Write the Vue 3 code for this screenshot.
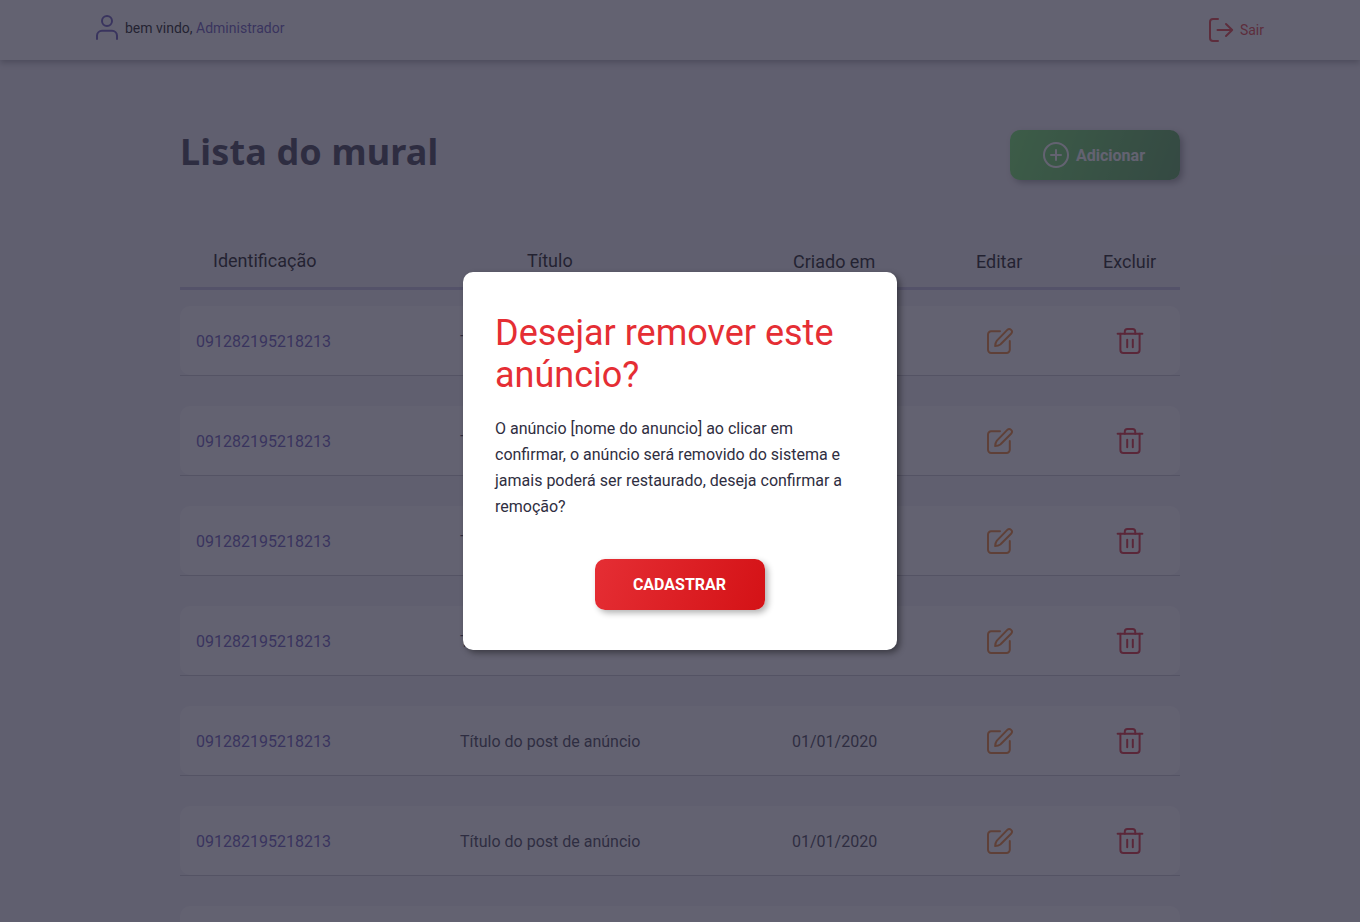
<script setup>
const rows = Array.from({ length: 6 }, (_, i) => ({
  key: i,
  id: '091282195218213',
  title: 'Título do post de anúncio',
  date: '01/01/2020',
}))
</script>

<template>
  <div class="page">
    <header class="topbar">
      <div class="user">
        <svg class="user-icon" width="24" height="26" viewBox="0 0 24 26" fill="none">
          <circle cx="12" cy="6.9" r="5" />
          <path d="M2 25V21.6A5 5 0 0 1 7 16.8H17A5 5 0 0 1 22 21.6V25" />
        </svg>
        <p class="welcome">bem vindo, <span>Administrador</span></p>
      </div>
      <a class="logout">
        <svg width="26" height="26" viewBox="0 0 26 26" fill="none">
          <path d="M10 2H5A3 3 0 0 0 2 5V21A3 3 0 0 0 5 24H10" />
          <path d="M9.5 13H24.2M18 7L24.2 13L18 19" />
        </svg>
        <span>Sair</span>
      </a>
    </header>

    <main class="content">
      <div class="heading">
        <h1>Lista do mural</h1>
        <button class="add">
          <svg width="26" height="26" viewBox="0 0 26 26" fill="none">
            <circle cx="13" cy="13" r="12" />
            <path d="M13 8V18M8 13H18" />
          </svg>
          <span>Adicionar</span>
        </button>
      </div>

      <div class="thead">
        <span class="h-id">Identificação</span>
        <span class="h-title">Título</span>
        <span class="h-date">Criado em</span>
        <span class="h-edit">Editar</span>
        <span class="h-del">Excluir</span>
      </div>

      <div v-for="row in rows" :key="row.key" class="row">
        <div class="card">
          <span class="id">{{ row.id }}</span>
          <span class="title">{{ row.title }}</span>
          <span class="date">{{ row.date }}</span>
          <svg class="edit" width="28" height="28" viewBox="0 0 28 28" fill="none">
            <path d="M14 4.3H5.2A3.2 3.2 0 0 0 2 7.5V22.8A3.2 3.2 0 0 0 5.2 26H20.6A3.2 3.2 0 0 0 23.8 22.8V14" />
            <path d="M21.3 2.9A2.6 2.6 0 0 1 25.1 6.7L14.3 17.5Q12.2 19.1 9.2 19.1Q9.1 16 10.9 13.6Z" />
          </svg>
          <svg class="trash" width="28" height="28" viewBox="0 0 28 28" fill="none">
            <path d="M1.6 6.7H26.4" />
            <path d="M8.8 6.7V4.5A2.5 2.5 0 0 1 11.3 2H16.7A2.5 2.5 0 0 1 19.2 4.5V6.7" />
            <path d="M4.4 6.7V23A3 3 0 0 0 7.4 26H20.6A3 3 0 0 0 23.6 23V6.7" />
            <path d="M11.2 12.7V20.3M16.8 12.7V20.3" />
          </svg>
        </div>
      </div>
      <div class="row">
        <div class="card"></div>
      </div>
    </main>

    <div class="overlay">
      <section class="modal">
        <h2>Desejar remover este anúncio?</h2>
        <p>
          O anúncio [nome do anuncio] ao clicar em confirmar, o anúncio será removido do sistema e
          jamais poderá ser restaurado, deseja confirmar a remoção?
        </p>
        <button class="confirm">CADASTRAR</button>
      </section>
    </div>
  </div>
</template>

<style>
body {
  margin: 0;
  overflow: hidden;
}
</style>

<style scoped>
.page {
  position: relative;
  height: 922px;
  overflow: hidden;
  background: #f2f1f5;
  color: #2f2e41;
  font-family: Roboto, sans-serif;
}
h1,
h2,
p {
  margin: 0;
}
button {
  border: 0;
  padding: 0;
  font-family: inherit;
}
svg {
  display: block;
  flex: none;
  stroke-width: 2;
  stroke-linecap: round;
  stroke-linejoin: round;
}
.topbar {
  display: flex;
  justify-content: space-between;
  align-items: center;
  box-sizing: border-box;
  height: 60px;
  padding: 0 96px 0 95px;
  background: #fff;
  box-shadow: 0 3px 6px rgba(0, 0, 0, 0.3);
}
.user {
  display: flex;
  gap: 6px;
  margin-bottom: 5px;
}
.user-icon {
  stroke: #5a48b4;
}
.welcome {
  font-size: 14px;
  line-height: 28px;
  color: #000;
}
.welcome span {
  color: #5a48b4;
}
.logout {
  display: flex;
  align-items: center;
  gap: 6px;
  font-size: 14px;
  color: #e52e2e;
}
.logout svg {
  stroke: currentColor;
}
.content {
  width: 1000px;
  margin: 0 auto;
}
.heading {
  display: flex;
  justify-content: space-between;
  padding-top: 70px;
  height: 110px;
}
h1 {
  font-family: 'Noto Sans', sans-serif;
  font-size: 36px;
  line-height: 44px;
  font-weight: 700;
  letter-spacing: 0.15px;
}
.add {
  display: flex;
  align-items: center;
  justify-content: center;
  gap: 7px;
  box-sizing: border-box;
  width: 170px;
  height: 50px;
  padding-right: 2px;
  border-radius: 10px;
  background: linear-gradient(110deg, #66e85c, #469c46);
  box-shadow: 3px 3px 6px rgba(0, 0, 0, 0.35);
  color: #fff;
  font-size: 16px;
  font-weight: 700;
}
.add svg {
  stroke: #fff;
}
.thead {
  display: grid;
  grid-template-columns: 314px 266px 183px 127px auto;
  padding-left: 33px;
  height: 47px;
  border-bottom: 3px solid #c4c0e0;
  font-size: 18px;
  line-height: 42px;
  color: #000;
}
.h-date,
.h-edit,
.h-del {
  padding-top: 1px;
}
.row {
  height: 70px;
  margin-top: 30px;
  box-shadow: inset 0 -1px #c4c4cc;
}
.thead + .row {
  margin-top: 16px;
}
.card {
  display: grid;
  grid-template-columns: 264px 332px 194px 130px auto;
  align-items: center;
  height: 69px;
  padding-left: 16px;
  border-radius: 10px;
  background: #fff;
  font-size: 16px;
}
.card span {
  padding-top: 2px;
}
.id {
  color: #5a48b4;
}
.edit {
  stroke: #ee7a1c;
}
.trash {
  stroke: #dc1622;
}
.overlay {
  position: absolute;
  inset: 0;
  display: flex;
  align-items: center;
  justify-content: center;
  background: rgba(47, 46, 65, 0.75);
}
.modal {
  box-sizing: border-box;
  width: 434px;
  height: 378px;
  padding: 40px 32px;
  border-radius: 10px;
  background: #fff;
  box-shadow: 3px 3px 6px rgba(0, 0, 0, 0.4);
}
h2 {
  font-size: 36px;
  line-height: 42px;
  font-weight: 400;
  color: #e52e34;
}
.modal p {
  margin-top: 20px;
  font-size: 16px;
  line-height: 26px;
}
.confirm {
  display: block;
  box-sizing: border-box;
  width: 170px;
  height: 51px;
  margin: 39px auto 0;
  padding: 0 1px 1px 0;
  border-radius: 10px;
  background: linear-gradient(110deg, #e52e34, #d41216);
  box-shadow: 3px 3px 6px rgba(0, 0, 0, 0.3);
  color: #fff;
  font-size: 16px;
  font-weight: 700;
}
</style>
